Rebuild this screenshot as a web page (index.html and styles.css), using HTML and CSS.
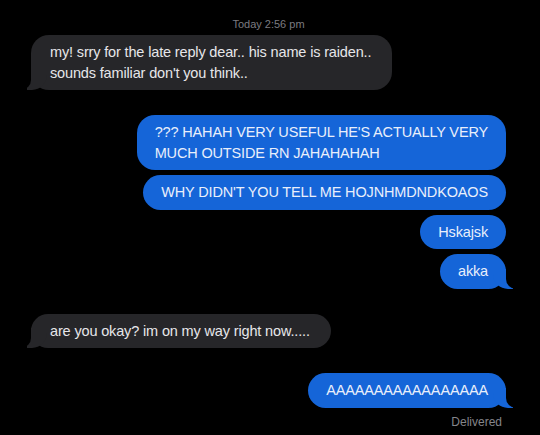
FILE: index.html
```html
<!DOCTYPE html>
<html>
    <head lang="en">
        <meta name="viewport" content="width=device-width, initial-scale=1" />
        <title>Messages</title>
        <link rel="stylesheet" href="styles.css">
    </head>
    <body>
        <div class="thread">
            <p class="stamp">Today 2:56 pm</p>

            <div class="bubble them tail">my! srry for the late reply dear.. his name is raiden..<br>sounds familiar don't you think..</div>

            <div class="group">
                <div class="bubble me">??? HAHAH VERY USEFUL HE'S ACTUALLY VERY<br>MUCH OUTSIDE RN JAHAHAHAH</div>
                <div class="bubble me">WHY DIDN'T YOU TELL ME HOJNHMDNDKOAOS</div>
                <div class="bubble me">Hskajsk</div>
                <div class="bubble me tail">akka</div>
            </div>

            <div class="bubble them tail">are you okay? im on my way right now.....</div>

            <div class="group">
                <div class="bubble me tail">AAAAAAAAAAAAAAAAA</div>
                <p class="status">Delivered</p>
            </div>
        </div>
    </body>
</html>
```

FILE: styles.css
```css
body {
    margin: 0;
    background-color: #000;
    font-family: "Liberation Sans", Arial, sans-serif;
}

.thread {
    display: flex;
    flex-direction: column;
    padding: 17px 34px 0 31px;
}

.stamp {
    margin: 0 0 4px;
    text-align: center;
    font-size: 11px;
    line-height: 14px;
    color: #7b7b80;
}

.group {
    display: flex;
    flex-direction: column;
    align-items: flex-end;
    gap: 5px;
    margin-top: 25px;
}

.bubble {
    position: relative;
    padding: 7px 18px;
    font-size: 14.5px;
    letter-spacing: -0.15px;
    line-height: 20.5px;
    border-radius: 18px;
    white-space: nowrap;
}

/* grey, left side */
.them {
    align-self: flex-start;
    background-color: #262629;
    color: #e6e6ea;
    padding-left: 19px;
    padding-right: 21px;
}
.them + .group,
.group + .them {
    margin-top: 25px;
}

/* blue, right side */
.me {
    background-color: #1565d8;
    color: #e9effb;
}

/* the little curl under the last bubble */
.tail::before,
.tail::after {
    content: "";
    position: absolute;
    bottom: 0;
    height: 20px;
}
.them.tail::before {
    left: -4px;
    width: 20px;
    background-color: #262629;
    border-bottom-right-radius: 15px;
}
.them.tail::after {
    left: -10px;
    width: 10px;
    background-color: #000;
    border-bottom-right-radius: 10px;
}
.me.tail::before {
    right: -7px;
    width: 20px;
    background-color: #1565d8;
    border-bottom-left-radius: 15px;
}
.me.tail::after {
    right: -10px;
    width: 10px;
    background-color: #000;
    border-bottom-left-radius: 10px;
}

.status {
    margin: 2px 4px 0 0;
    font-size: 12px;
    line-height: 14px;
    color: #85858a;
}
```
